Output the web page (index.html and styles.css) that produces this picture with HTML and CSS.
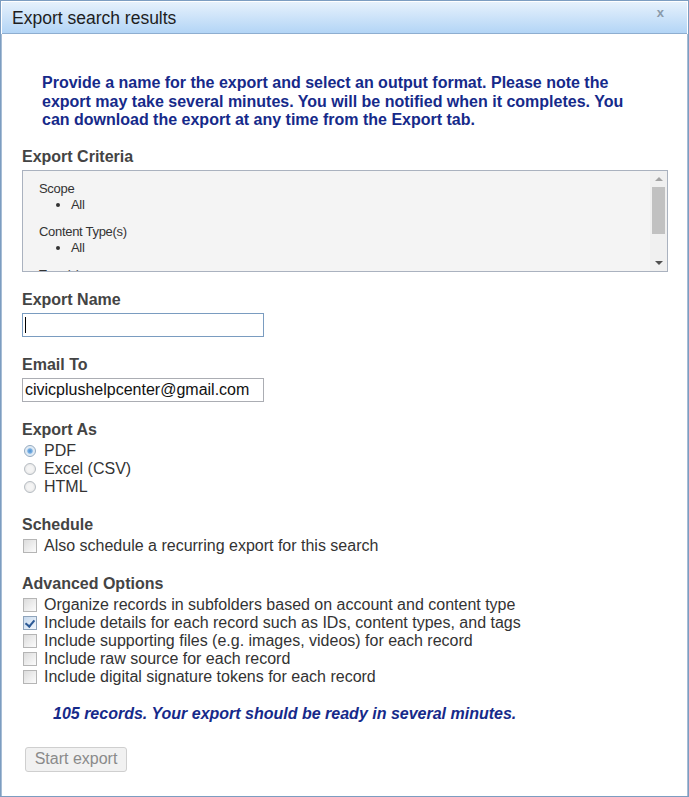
FILE: index.html
```
<!DOCTYPE html>
<html lang="en">
<head>
    <meta charset="UTF-8">
    <meta name="viewport" content="width=device-width, initial-scale=1.0">
    <title>Export search results</title>
    <link rel="stylesheet" href="styles.css">
</head>
<body>
    <div class="dialog">
        <div class="titlebar">
            <span class="title">Export search results</span>
            <span class="close">x</span>
        </div>
        <div class="content">
            <p class="intro">Provide a name for the export and select an output format. Please note the export may take several minutes. You will be notified when it completes. You can download the export at any time from the Export tab.</p>

            <div class="field first">
                <h3>Export Criteria</h3>
                <div class="criteria">
                    <div class="criteria-list">
                        <div class="group">
                            <div class="group-name">Scope</div>
                            <ul><li>All</li></ul>
                        </div>
                        <div class="group">
                            <div class="group-name">Content Type(s)</div>
                            <ul><li>All</li></ul>
                        </div>
                        <div class="group">
                            <div class="group-name">Type(s)</div>
                        </div>
                    </div>
                    <div class="scrollbar">
                        <span class="arrow up"></span>
                        <span class="thumb"></span>
                        <span class="track"></span>
                        <span class="arrow down"></span>
                    </div>
                </div>
            </div>

            <div class="field">
                <h3>Export Name</h3>
                <div class="textbox focused"><span class="caret"></span></div>
            </div>

            <div class="field">
                <h3>Email To</h3>
                <div class="textbox">civicplushelpcenter@gmail.com</div>
            </div>

            <div class="field">
                <h3>Export As</h3>
                <label class="option"><span class="radio checked"></span>PDF</label>
                <label class="option"><span class="radio"></span>Excel (CSV)</label>
                <label class="option"><span class="radio"></span>HTML</label>
            </div>

            <div class="field">
                <h3>Schedule</h3>
                <label class="option"><span class="check"></span>Also schedule a recurring export for this search</label>
            </div>

            <div class="field">
                <h3>Advanced Options</h3>
                <label class="option"><span class="check"></span>Organize records in subfolders based on account and content type</label>
                <label class="option"><span class="check checked"></span>Include details for each record such as IDs, content types, and tags</label>
                <label class="option"><span class="check"></span>Include supporting files (e.g. images, videos) for each record</label>
                <label class="option"><span class="check"></span>Include raw source for each record</label>
                <label class="option"><span class="check"></span>Include digital signature tokens for each record</label>
            </div>

            <p class="summary">105 records. Your export should be ready in several minutes.</p>

            <button class="start-btn" disabled>Start export</button>
        </div>
    </div>
</body>
</html>
```

FILE: styles.css
```
* {
    margin: 0;
    padding: 0;
    box-sizing: border-box;
}
body {
    font-family: 'Liberation Sans', Arial, sans-serif;
    background: #fff;
    color: #333;
}
.dialog {
    width: 689px;
    height: 797px;
    border: 1px solid #7c9dc1;
    display: flex;
    flex-direction: column;
}
.titlebar {
    height: 32px;
    flex-shrink: 0;
    display: flex;
    align-items: center;
    justify-content: space-between;
    padding: 0 23px 0 10px;
    margin: 1px 1px 0 1px;
    background: linear-gradient(#e6f1fc, #b3d5f6);
    border-bottom: 1px solid #8eaed0;
}
.title {
    font-size: 17.5px;
    color: #1e1e1e;
    padding-top: 1px;
}
.close {
    font-size: 13px;
    font-weight: bold;
    color: #8a9aaa;
    margin-top: -10px;
}
.content {
    flex: 1;
    padding: 0 19px 0 20px;
    border-left: 1px solid #a7bdd5;
    border-right: 1px solid #a7bdd5;
}
.intro {
    margin: 40px 19px 0 20px;
    font-size: 16px;
    line-height: 18.5px;
    font-weight: bold;
    color: #162a8a;
}
.field {
    margin-top: 19px;
}
.field.first {
    margin-top: 18px;
}
h3 {
    font-size: 16px;
    line-height: 18px;
    color: #444;
    margin-bottom: 4px;
}
.criteria {
    height: 102px;
    border: 1px solid #aab2bf;
    background: #f4f4f4;
    display: flex;
}
.criteria-list {
    flex: 1;
    overflow: hidden;
    padding: 10px 0 0 16px;
    font-size: 13px;
    line-height: 16px;
    color: #333;
    letter-spacing: -0.3px;
}
.group {
    margin-bottom: 11px;
}
.group ul {
    margin-left: 32px;
}
.scrollbar {
    width: 17px;
    background: #f0f0f0;
    display: flex;
    flex-direction: column;
    align-items: center;
}
.arrow {
    width: 0;
    height: 0;
    border-left: 4px solid transparent;
    border-right: 4px solid transparent;
    margin: 6px 0;
}
.arrow.up {
    border-bottom: 4px solid #a3a3a3;
}
.arrow.down {
    border-top: 4px solid #505050;
}
.thumb {
    width: 13px;
    height: 47px;
    background: #c1c1c1;
}
.track {
    flex: 1;
}
.textbox {
    width: 242px;
    height: 24px;
    border: 1px solid #abadb3;
    background: #fff;
    font-size: 16px;
    line-height: 22px;
    padding-left: 2px;
    color: #111;
    display: flex;
    align-items: center;
}
.textbox.focused {
    border-color: #7a9cc0;
}
.caret {
    width: 1px;
    height: 16px;
    background: #000;
}
.option {
    display: flex;
    align-items: center;
    height: 18px;
    padding-bottom: 2px;
    font-size: 16px;
    color: #333;
}
.radio {
    width: 12px;
    height: 12px;
    border-radius: 50%;
    border: 1px solid #b6bcc2;
    background: radial-gradient(circle, #f4f4f4 40%, #dcdcdc);
    margin: 0 8px 0 2px;
}
.radio.checked {
    border-color: #94aac0;
    background: radial-gradient(circle, #4e8fd0 0, #7cb2e4 32%, #dce8f3 45%, #eef3f8);
}
.check {
    width: 14px;
    height: 14px;
    border: 1px solid #b5b5b5;
    background: linear-gradient(135deg, #dcdcdc, #fcfcfc);
    margin: 0 7px 0 1px;
    position: relative;
}
.check.checked {
    border-color: #8fa4bb;
    background: linear-gradient(135deg, #c6d9ee, #f4f8fc);
}
.check.checked::after {
    content: "";
    position: absolute;
    left: 3px;
    top: 1px;
    width: 4px;
    height: 7px;
    border-right: 2px solid #2c5a96;
    border-bottom: 2px solid #2c5a96;
    transform: rotate(40deg);
}
.summary {
    margin: 18px 0 0 31px;
    font-size: 16px;
    line-height: 18px;
    font-weight: bold;
    font-style: italic;
    color: #162a8a;
}
.start-btn {
    margin: 24px 0 0 3px;
    width: 102px;
    height: 25px;
    border: 1px solid #cfcfcf;
    border-radius: 3px;
    background: #f1f1f1;
    color: #8a8a8a;
    font-family: 'Liberation Sans', Arial, sans-serif;
    font-size: 16px;
}
```
